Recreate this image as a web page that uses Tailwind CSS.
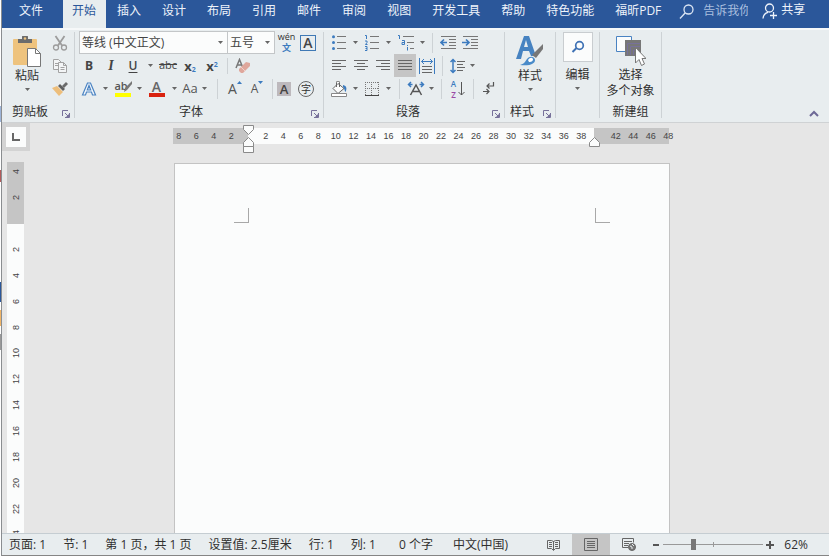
<!DOCTYPE html>
<html lang="zh-CN">
<head>
<meta charset="utf-8">
<title>文档</title>
<script src="https://cdn.jsdelivr.net/npm/@tailwindcss/browser@4"></script>
</head>
<body class="flex h-screen overflow-hidden bg-white font-['Open_Sans','Noto_Sans_CJK_SC',sans-serif] text-xs text-[#303030]">
<svg class="hidden" aria-hidden="true">
  <symbol id="tri" viewBox="0 0 5 3"><path d="M0 0h5L2.500 3z" fill="#666"/></symbol>
  <symbol id="launch" viewBox="0 0 8 8"><path d="M.5 6V.5H6M3 3l3.500 3.500M7.500 3v4.500H3" fill="none" stroke="#77719a"/><path d="M7 4v3H4z" fill="#77719a"/></symbol>
</svg>

<div class="flex w-0.5 shrink-0 flex-col border-r border-[#8a8d90]" aria-hidden="true">
  <div class="h-[106px]"></div><div class="h-4 bg-[#9db4d8]"></div><div class="h-12"></div>
  <div class="h-3 bg-[#b35a5a]"></div><div class="h-[100px]"></div>
  <div class="h-5 bg-[#2b579a]"></div><div class="h-2"></div><div class="h-4 bg-[#f0b567]"></div>
  <div class="h-2"></div><div class="h-4 bg-[#999]"></div>
</div>

<div class="flex min-w-0 flex-1 flex-col">
  <header class="flex h-7 shrink-0 bg-[#2b579a] leading-[22px] text-[#eef3fa]">
    <nav class="flex gap-px whitespace-nowrap">
      <a href="#" class="pr-[19px] pl-[17px]">文件</a>
      <a href="#" aria-current="page" class="bg-[#e8edef] pr-2.5 pl-[9px] text-[#2b579a]">开始</a>
      <a href="#" class="px-2.5">插入</a>
      <a href="#" class="px-2.5">设计</a>
      <a href="#" class="px-2.5">布局</a>
      <a href="#" class="px-2.5">引用</a>
      <a href="#" class="px-2.5">邮件</a>
      <a href="#" class="px-2.5">审阅</a>
      <a href="#" class="px-2.5">视图</a>
      <a href="#" class="px-2.5">开发工具</a>
      <a href="#" class="px-2.5">帮助</a>
      <a href="#" class="px-2.5">特色功能</a>
      <a href="#" class="px-2.5">福昕PDF</a>
    </nav>
    <label class="ml-2 flex gap-2">
      <svg class="mt-1 h-4 w-4" viewBox="0 0 16 16" fill="none" stroke="#dce6f4" stroke-width="1.300"><circle cx="9.500" cy="5.500" r="4.500"/><path d="M6.300 8.700L1 14.500"/></svg>
      <input aria-label="告诉我你想要做什么" placeholder="告诉我你想要做什么" class="h-[22px] w-[45px] bg-transparent outline-none placeholder:text-[#a9bfdf]">
    </label>
    <button class="ml-3.5 flex items-start gap-[3px]">
      <svg class="mt-[3px] h-4 w-4" viewBox="0 0 16 16" fill="none" stroke="#eef3fa" stroke-width="1.300"><circle cx="7.500" cy="5" r="4"/><path d="M1 15.500c.3-3.500 2-5.500 5-6.200M8 12.500h7M11.500 9v7"/></svg>
      <span class="leading-5">共享</span>
    </button>
  </header>

  <section class="flex h-[95px] shrink-0 border-t-2 border-b border-t-[#f6f8f9] border-b-[#cfd2d4] bg-[#e8edef]">

    <div class="mt-0.5 mb-1 flex w-[73px] flex-col border-r border-[#cdd2d5] *:shrink-0">
      <div class="-mt-px flex h-[69px]">
        <button class="flex w-[50px] flex-col items-center pt-[5px]">
          <svg class="h-8 w-7" viewBox="0 0 28 32"><rect x="0" y="3" width="24" height="26" rx="1" fill="#eec37e"/><path d="M5 7V3h4V1a3 2 0 0 1 6 0v2h4v4z" fill="#6c6c6c"/><circle cx="12" cy="2.500" r="1.200" fill="#eec37e"/><path d="M14.500 12.500h8l5 5v13h-13z" fill="#fff" stroke="#777"/><path d="M22.500 12.500v5h5" fill="none" stroke="#777"/></svg>
          <span class="leading-4">粘贴</span>
          <svg class="mt-1 h-[3px] w-[5px]"><use href="#tri"/></svg>
        </button>
        <div class="flex flex-1 flex-col">
          <button aria-label="剪切" class="grid h-[23px] w-4 place-items-center"><svg class="h-4 w-4" viewBox="0 0 16 16" fill="none" stroke="#9c9c9c" stroke-width="1.300"><path d="M3.500 1l6.500 9.500M12.500 1L6 10.500" stroke-width="1.800"/><circle cx="4" cy="12.500" r="2.500"/><circle cx="12" cy="12.500" r="2.500"/></svg></button>
          <button aria-label="复制" class="grid h-[23px] w-4 place-items-center"><svg class="h-4 w-4" viewBox="0 0 16 16" fill="#f3f5f6" stroke="#a2a2a2"><path d="M1.500 1.500h5l3 3v7h-8z"/><path d="M3 5.500h3M3 7.500h3"/><path d="M6.500 4.500h5l3 3v7h-8zM11.500 4.500v3h3"/><path d="M8.500 9.500h4M8.500 11.500h4"/></svg></button>
          <button aria-label="格式刷" class="grid h-[23px] w-4 place-items-center"><svg class="h-4 w-4" viewBox="0 0 16 16"><path d="M0 7l5-2 6 6-4 4z" fill="#edbe7b"/><path d="M6 5l2-2 5 5-2 2z" fill="#5f5f5f"/><path d="M10 5l4-4 2 2-4 4z" fill="#6b6b6b"/></svg></button>
        </div>
      </div>
      <div class="flex h-5 items-center pt-1"><span class="flex-1 text-center">剪贴板</span><button aria-label="剪贴板选项" class="grid w-4 place-items-center pt-1"><svg class="h-2 w-2"><use href="#launch"/></svg></button></div>
    </div>

    <div class="mt-0.5 mb-1 flex w-[249px] flex-col border-r border-[#cdd2d5] pl-1 *:shrink-0">
      <div class="-mt-px flex h-[23px] items-center">
        <div class="grid h-[23px] w-[149px] items-center border border-[#c3c6c8] bg-[#fbfcfc]">
          <select aria-label="字体" class="col-start-1 row-start-1 appearance-none bg-transparent px-0.5 text-[#444]"><option>等线 (中文正文)</option></select>
          <svg class="pointer-events-none col-start-1 row-start-1 mr-1 h-[3px] w-[5px] justify-self-end"><use href="#tri"/></svg>
        </div>
        <div class="grid h-[23px] w-[47px] items-center border border-l-0 border-[#c3c6c8] bg-[#fbfcfc]">
          <select aria-label="字号" class="col-start-1 row-start-1 appearance-none bg-transparent px-0.5 text-[#444]"><option>五号</option></select>
          <svg class="pointer-events-none col-start-1 row-start-1 mr-1 h-[3px] w-[5px] justify-self-end"><use href="#tri"/></svg>
        </div>
        <button aria-label="拼音指南" class="flex w-[23px] flex-col items-center text-[9px]"><span class="leading-[11px]">wén</span><span class="leading-3 font-bold text-[#3c7bbf]">文</span></button>
        <button aria-label="字符边框" class="ml-0.5 grid h-4 w-4 place-items-center border border-[#3f79b5] text-sm leading-3 font-semibold text-[#444]">A</button>
      </div>
      <div class="flex h-[23px] items-center text-[#444]">
        <button aria-label="加粗" class="w-5 font-bold">B</button>
        <button aria-label="倾斜" class="w-6 font-['Liberation_Serif',serif] text-sm font-bold italic">I</button>
        <button aria-label="下划线" class="w-5 font-semibold underline underline-offset-2">U</button>
        <button aria-label="下划线样式" class="grid h-4 w-3.5 place-items-center"><svg class="h-[3px] w-[5px]"><use href="#tri"/></svg></button>
        <button aria-label="删除线" class="w-[22px] text-[11px] line-through">abc</button>
        <button aria-label="下标" class="w-[22px] text-[13px] leading-4 font-bold">x<sub class="text-[7px] text-[#3c7bbf]">2</sub></button>
        <button aria-label="上标" class="w-[22px] text-[13px] leading-4 font-bold">x<sup class="text-[7px] text-[#3c7bbf]">2</sup></button>
        <span class="mx-1 h-4 w-px bg-[#cdd2d5]"></span>
        <button aria-label="清除格式" class="grid w-[22px] place-items-center"><svg class="h-4 w-4" viewBox="0 0 16 16"><path d="M1 10L4.500 1.500 8 10M2.500 7H7" fill="none" stroke="#777" stroke-width="1.500"/><path d="M4 11l7-7 4 1v3l-7 7H6l-2-2z" fill="#dfa79c"/><path d="M6 9l4 4" stroke="#efd0c9"/></svg></button>
      </div>
      <div class="flex h-[23px] items-center">
        <button aria-label="文本效果" class="grid w-5 place-items-center"><svg class="h-4 w-4" viewBox="0 0 16 16"><path d="M1.500 14L6.500 2h3l5 12h-3l-1-3h-5l-1 3zM6.300 9h3.400L8 4.500z" fill="#f4f8fc" stroke="#4a83c2" stroke-width="1.200"/></svg></button>
        <button aria-label="更多文本效果" class="grid h-4 w-3 place-items-center"><svg class="h-[3px] w-[5px]"><use href="#tri"/></svg></button>
        <button aria-label="突出显示" class="flex w-6 flex-col items-center"><span class="flex h-3 items-center text-[11px] font-semibold text-[#555]">ab<svg class="-ml-1 h-3 w-2" viewBox="0 0 8 12"><path d="M8 0v3L3 9 0 11l1-4z" fill="#777"/></svg></span><span class="h-1 w-4 bg-[#ffff00]"></span></button>
        <button aria-label="突出显示颜色" class="grid h-4 w-2 place-items-center"><svg class="h-[3px] w-[5px]"><use href="#tri"/></svg></button>
        <button aria-label="字体颜色" class="flex w-[27px] flex-col items-center"><span class="h-3 text-sm leading-3 font-semibold text-[#666]">A</span><span class="h-1 w-4 bg-[#d9220f]"></span></button>
        <button aria-label="更多字体颜色" class="grid h-4 w-2 place-items-center"><svg class="h-[3px] w-[5px]"><use href="#tri"/></svg></button>
        <button aria-label="更改大小写" class="flex h-4 w-[33px] items-center justify-center gap-1 text-[13px] text-[#555]">Aa<svg class="h-[3px] w-[5px]"><use href="#tri"/></svg></button>
        <span class="mx-1.5 h-5 w-px bg-[#cdd2d5]"></span>
        <button aria-label="增大字号" class="flex w-[22px] justify-center text-sm text-[#555]">A<svg class="mt-0.5 h-[3px] w-[5px]" viewBox="0 0 5 3"><path d="M0 3h5L2.500 0z" fill="#3c7bbf"/></svg></button>
        <button aria-label="减小字号" class="flex w-[22px] justify-center text-xs text-[#555]">A<svg class="h-[3px] w-[5px]" viewBox="0 0 5 3"><path d="M0 0h5L2.500 3z" fill="#3c7bbf"/></svg></button>
        <span class="mx-1 h-5 w-px bg-[#cdd2d5]"></span>
        <button aria-label="字符底纹" class="grid h-3.5 w-3.5 place-items-center bg-[#bdb9bd] text-[13px] leading-3 font-semibold text-[#444]">A</button>
        <button aria-label="带圈字符" class="ml-[7px] grid h-4 w-4 place-items-center rounded-full border border-[#666] text-[10px] leading-3">字</button>
      </div>
      <div class="flex h-5 items-center pt-1"><span class="flex-1 pr-1 text-center">字体</span><button aria-label="字体选项" class="grid w-4 place-items-center pt-1"><svg class="h-2 w-2"><use href="#launch"/></svg></button></div>
    </div>

    <div class="mt-0.5 mb-1 flex w-[181px] flex-col border-r border-[#cdd2d5] pl-1 *:shrink-0">
      <div class="-mt-px flex h-[23px] items-center">
        <button aria-label="项目符号" class="grid w-[22px] place-items-center"><svg class="h-4 w-4" viewBox="0 0 16 16"><path d="M6 1.500h9M6 7.500h9M6 13.500h9" stroke="#777"/><g fill="#3c7bbf"><circle cx="2.500" cy="1.700" r="1.500"/><circle cx="2.500" cy="7.500" r="1.500"/><circle cx="2.500" cy="13.500" r="1.500"/></g></svg></button>
        <button aria-label="项目符号库" class="grid h-4 w-[11px] place-items-center"><svg class="h-[3px] w-[5px]"><use href="#tri"/></svg></button>
        <button aria-label="编号" class="grid w-[22px] place-items-center"><svg class="h-4 w-4" viewBox="0 0 16 16" fill="none"><path d="M6 1.500h9M6 7.500h9M6 13.500h9" stroke="#777"/><path d="M1 .5h1.500V4M1 6h2v1.500L1.500 9.500h2M1 11.500h2v4H1M1.500 13.500H3" stroke="#3c7bbf"/></svg></button>
        <button aria-label="编号库" class="grid h-4 w-[11px] place-items-center"><svg class="h-[3px] w-[5px]"><use href="#tri"/></svg></button>
        <button aria-label="多级列表" class="grid w-[23px] place-items-center"><svg class="h-4 w-[18px]" viewBox="0 0 18 16" fill="none"><path d="M6 1.500h11M10 7.500h7M13 13.500h4" stroke="#777"/><path d="M1 .5h1.500V4M5 5.500h2.500v4H5V7.500h2.500M10.500 10v1M10.500 12v3.500" stroke="#3c7bbf"/></svg></button>
        <button aria-label="多级列表库" class="grid h-4 w-[11px] place-items-center"><svg class="h-[3px] w-[5px]"><use href="#tri"/></svg></button>
        <span class="mx-1 h-5 w-px bg-[#cdd2d5]"></span>
        <button aria-label="减少缩进量" class="grid w-[22px] place-items-center"><svg class="h-4 w-4" viewBox="0 0 16 16" fill="none"><path d="M1 1.500h15M9 4.500h7M9 7.500h7M9 10.500h7M1 13.500h15" stroke="#777"/><path d="M7 7.500H1M4 4.500l-3 3 3 3" stroke="#3c7bbf" stroke-width="1.700"/></svg></button>
        <button aria-label="增加缩进量" class="grid w-[22px] place-items-center"><svg class="h-4 w-4" viewBox="0 0 16 16" fill="none"><path d="M1 1.500h15M9 4.500h7M9 7.500h7M9 10.500h7M1 13.500h15" stroke="#777"/><path d="M0 7.500h6M4 4.500l3 3-3 3" stroke="#3c7bbf" stroke-width="1.700"/></svg></button>
      </div>
      <div class="flex h-[23px] items-center">
        <button aria-label="左对齐" class="grid h-[23px] w-[22px] place-items-center"><svg class="h-4 w-4" viewBox="0 0 16 16" stroke="#666"><path d="M1 2.500h14M1 5.500h9M1 8.500h14M1 11.500h9"/></svg></button>
        <button aria-label="居中" class="grid h-[23px] w-[22px] place-items-center"><svg class="h-4 w-4" viewBox="0 0 16 16" stroke="#666"><path d="M1 2.500h14M4 5.500h8M1 8.500h14M4 11.500h8"/></svg></button>
        <button aria-label="右对齐" class="grid h-[23px] w-[22px] place-items-center"><svg class="h-4 w-4" viewBox="0 0 16 16" stroke="#666"><path d="M1 2.500h14M6 5.500h9M1 8.500h14M6 11.500h9"/></svg></button>
        <button aria-label="两端对齐" aria-pressed="true" class="grid h-[23px] w-[22px] place-items-center bg-[#c5c5c5]"><svg class="h-4 w-4" viewBox="0 0 16 16" stroke="#666"><path d="M1 2.500h14M1 5.500h14M1 8.500h14M1 11.500h14"/></svg></button>
        <button aria-label="分散对齐" class="grid h-[23px] w-[22px] place-items-center"><svg class="h-4 w-4" viewBox="0 0 16 16" fill="none"><path d="M.5 0v16M15.500 0v16M2.500 3.500h11M5 1L2.500 3.500 5 6M11 1l2.500 2.500L11 6" stroke="#3c7bbf"/><path d="M3 8.500h10M3 11.500h10M3 14.500h10" stroke="#666"/></svg></button>
        <span class="mx-1 h-5 w-px bg-[#cdd2d5]"></span>
        <button aria-label="行和段落间距" class="flex h-[23px] w-[33px] items-center gap-1 pl-[3px]"><svg class="h-4 w-4" viewBox="0 0 16 16" fill="none"><path d="M3 1v14M.5 4L3 1.500 5.500 4M.5 12L3 14.500 5.500 12" stroke="#3c7bbf" stroke-width="1.500"/><path d="M7 3.500h8M7 6.500h6M7 9.500h8M7 12.500h6" stroke="#666"/></svg><svg class="h-[3px] w-[5px]"><use href="#tri"/></svg></button>
      </div>
      <div class="flex h-[23px] items-center">
        <button aria-label="底纹" class="grid w-[22px] place-items-center"><svg class="h-4 w-4" viewBox="0 0 16 16" fill="none"><path d="M7 2.500l6 5-6 5-5-5zM5.500 6V1.500a1.500 1.500 0 0 1 3 0V6" fill="#fbfcfc" stroke="#666"/><path d="M12 4c4 1 4 4 2.500 7-1-1-1-4-2.500-5z" fill="#3c7bbf"/><path d="M.5 12.500h15v3H.5z" fill="#fff" stroke="#888"/></svg></button>
        <button aria-label="底纹颜色" class="grid h-4 w-[11px] place-items-center"><svg class="h-[3px] w-[5px]"><use href="#tri"/></svg></button>
        <button aria-label="边框" class="grid w-[22px] place-items-center"><svg class="h-3.5 w-3.5" viewBox="0 0 14 14" fill="none"><path d="M0 .5h14M0 6.500h14M.5 0v14M6.500 0v14M13.500 0v14" stroke="#777" stroke-dasharray="1 1"/><path d="M0 13.500h14" stroke="#444"/></svg></button>
        <button aria-label="边框样式" class="grid h-4 w-[11px] place-items-center"><svg class="h-[3px] w-[5px]"><use href="#tri"/></svg></button>
        <span class="mx-[5px] h-5 w-px bg-[#cdd2d5]"></span>
        <button aria-label="中文版式" class="grid w-[22px] place-items-center"><svg class="h-4 w-[18px]" viewBox="0 0 18 16" fill="none"><path d="M3.500 14L9 4l5.500 10M6 10.500h6" stroke="#555" stroke-width="1.500"/><path d="M1.500 3.500h4M4 1L1.500 3.500 4 6M12.500 3.500h4M14 1l2.500 2.500L14 6" stroke="#3c7bbf" stroke-width="1.500"/></svg></button>
        <button aria-label="更多中文版式" class="grid h-4 w-[9px] place-items-center"><svg class="h-[3px] w-[5px]"><use href="#tri"/></svg></button>
        <span class="mx-[5px] h-5 w-px bg-[#cdd2d5]"></span>
        <button aria-label="排序" class="flex h-[22px] w-[22px] items-center justify-center gap-0.5 text-[8px] leading-[11px] font-semibold"><span class="flex flex-col"><span class="text-[#3c7bbf]">A</span><span class="text-[#9a4aa5]">Z</span></span><svg class="h-4 w-[7px]" viewBox="0 0 7 16" fill="none" stroke="#555"><path d="M3.500 1v13M.5 11l3 3 3-3"/></svg></button>
        <span class="mx-1 h-5 w-px bg-[#cdd2d5]"></span>
        <button aria-label="显示编辑标记" class="grid w-[22px] place-items-center"><svg class="h-4 w-4" viewBox="0 0 16 16" fill="none" stroke="#555" stroke-width="1.200"><path d="M12.500 1v4H6M8.500 2.500L6 5l2.500 2.500M2 10.500h6M5.500 8L8 10.500 5.500 13"/></svg></button>
      </div>
      <div class="flex h-5 items-center pt-1"><span class="flex-1 text-center">段落</span><button aria-label="段落选项" class="grid w-4 place-items-center pt-1"><svg class="h-2 w-2"><use href="#launch"/></svg></button></div>
    </div>

    <div class="mt-0.5 mb-1 flex w-[51px] flex-col border-r border-[#cdd2d5] *:shrink-0">
      <button class="-mt-px flex h-[69px] flex-col items-center pt-[5px]">
        <svg class="h-8 w-7" viewBox="0 0 28 32"><path d="M0 23L8 0h5l7 20h-5l-2-5H7l-2 8zM8 11h4l-2-7z" fill="#4783c1"/><path d="M27 8v5l-7 9-4-3z" fill="#777"/><path d="M4 29c4-1 5-3 7-6 3-4 8-2 8 1 0 4-5 6-15 5z" fill="#4a8bc9"/><path d="M12 24c2-3 5-3 5 0-1 2-3 2-4 2z" fill="#fff"/></svg>
        <span class="leading-4">样式</span>
        <svg class="mt-1 h-[3px] w-[5px]"><use href="#tri"/></svg>
      </button>
      <div class="flex h-5 items-center pt-1"><span class="flex-1 text-center">样式</span><button aria-label="样式选项" class="grid w-4 place-items-center pt-1"><svg class="h-2 w-2"><use href="#launch"/></svg></button></div>
    </div>

    <div class="mt-0.5 mb-1 flex w-11 flex-col border-r border-[#cdd2d5] *:shrink-0">
      <button class="flex flex-col items-center">
        <span class="grid h-[30px] w-[30px] place-items-center border border-[#c9cdd0] bg-[#fbfcfc]"><svg class="h-3.5 w-3.5" viewBox="0 0 14 14" fill="none" stroke="#3f72b5"><circle cx="8.500" cy="5.500" r="3.800" stroke-width="1.700"/><path d="M5.500 8L1.500 12" stroke-width="2"/></svg></span>
        <span class="mt-1 leading-[18px]">编辑</span>
        <svg class="mt-[3px] h-[3px] w-[5px]"><use href="#tri"/></svg>
      </button>
    </div>

    <div class="mt-0.5 mb-1 flex w-[62px] flex-col border-r border-[#cdd2d5] *:shrink-0">
      <button class="-mt-px flex h-[69px] flex-col items-center pt-1">
        <svg class="h-8 w-[30px] shrink-0" viewBox="0 0 30 32"><path d="M.5 1.500h15v15H.5z" fill="#fbfcfc" stroke="#4a83c2"/><path d="M9 5h16v16H9z" fill="#777"/><path d="M11.500 20V8.500H24M14.500 20v-8.500H24M17.500 20v-5H22" fill="none" stroke="#77719a"/><path d="M19.500 12.500V28l3.500-3.500 2.500 6 3-1.500-2.500-5.500H30z" fill="#fff" stroke="#777"/></svg>
        <span class="leading-4">选择<br>多个对象</span>
      </button>
      <div class="flex h-5 items-center justify-center pt-1">新建组</div>
    </div>
    <button aria-label="折叠功能区" class="mt-auto mr-2.5 mb-1 ml-auto"><svg class="h-2 w-2.5" viewBox="0 0 10 8" fill="none" stroke="#6d6896" stroke-width="2"><path d="M1 6l4-4 4 4"/></svg></button>
  </section>

  <main class="flex min-h-0 flex-1 bg-[#e6e6e6] font-['Liberation_Sans',sans-serif] text-[9px] leading-4 text-[#444]">
    <div class="flex w-7 shrink-0 flex-col">
      <button aria-label="制表符" class="grid h-7 w-7 shrink-0 place-items-center border-4 border-[#d3d3d3] bg-[#fbfcfc]"><svg class="h-2 w-2" viewBox="0 0 8 8"><path d="M1 0v7h7" fill="none" stroke="#666" stroke-width="2"/></svg></button>
      <div class="mt-[11px] ml-[5px] flex min-h-0 w-[17px] flex-1 flex-col overflow-hidden bg-[#fbfcfc] text-center leading-[18px]">
        <div class="flex shrink-0 flex-col bg-[#c5c5c5] pb-[14px] *:h-[26px] *:w-full *:rotate-180 *:[writing-mode:vertical-rl]"><span class="-mt-1">4</span><span>2</span></div>
        <div class="flex flex-col pt-3 *:h-[26px] *:w-full *:shrink-0 *:rotate-180 *:[writing-mode:vertical-rl]"><span>2</span><span>4</span><span>6</span><span>8</span><span>10</span><span>12</span><span>14</span><span>16</span><span>18</span><span>20</span><span>22</span><span>24</span></div>
      </div>
    </div>
    <div class="flex min-w-0 flex-1 flex-col items-center pt-[5px] pr-[17px]">
      <div class="relative flex h-4 w-[496px] text-center">
        <div class="w-[75px] bg-[#c5c5c5]"><div class="mr-2 -ml-[3px] grid grid-cols-4"><span>8</span><span>6</span><span>4</span><span>2</span></div></div>
        <div class="grid flex-1 grid-cols-19 bg-[#fbfcfc] pr-1 pl-[9px]"><span>2</span><span>4</span><span>6</span><span>8</span><span>10</span><span>12</span><span>14</span><span>16</span><span>18</span><span>20</span><span>22</span><span>24</span><span>26</span><span>28</span><span>30</span><span>32</span><span>34</span><span>36</span><span>38</span></div>
        <div class="w-[75px] bg-[#c5c5c5]"><div class="-mr-2 ml-[13px] grid grid-cols-4"><span>42</span><span>44</span><span>46</span><span>48</span></div></div>
        <svg class="absolute -top-[3px] left-[70px] h-7 w-[11px]" viewBox="0 0 11 28" fill="#fbfcfc" stroke="#8a8a8a"><path d="M.5.5h10v4l-5 5-5-5zM.5 21.500v-4l5-5 5 5v4zM.5 21.500h10v6H.5z"/></svg>
        <svg class="absolute top-[9px] right-[69px] h-2.5 w-[11px]" viewBox="0 0 11 10" fill="#fbfcfc" stroke="#8a8a8a"><path d="M.5 9.500v-4l5-5 5 5v4z"/></svg>
      </div>
      <article aria-label="文档页面" class="mt-[19px] ml-0.5 flex w-[496px] flex-1 justify-between border border-b-0 border-[#c3c3c3] bg-[#fbfcfc] px-[59px] pt-11">
        <span class="h-[15px] w-[15px] border-r border-b border-[#a8a8a8]"></span>
        <span class="h-[15px] w-[15px] border-b border-l border-[#a8a8a8]"></span>
      </article>
    </div>
  </main>

  <footer class="flex h-[23px] shrink-0 items-center border-t border-b border-t-[#c5cdd2] border-b-[#858585] bg-[#e8edef] pl-[7px] leading-4 whitespace-nowrap">
    <div class="flex gap-[17px]"><span>页面: 1</span><span>节: 1</span><span>第 1 页，共 1 页</span><span>设置值: 2.5厘米</span><span>行: 1</span><span>列: 1</span></div>
    <div class="ml-[23px] flex gap-5"><span>0 个字</span><span>中文(中国)</span></div>
    <div class="ml-auto flex h-full items-center">
      <button aria-label="阅读视图" class="grid h-full w-[38px] place-items-center"><svg class="h-3 w-[13px]" viewBox="0 0 13 12" fill="none" stroke="#666"><path d="M.5 1.500h4l2 1 2-1h4v8h-4l-2 2-2-2h-4zM6.500 2v9M2 3.500h3M2 5.500h3M2 7.500h3M8 3.500h3M8 5.500h3M8 7.500h3"/></svg></button>
      <button aria-label="页面视图" aria-pressed="true" class="grid h-full w-[38px] place-items-center bg-[#c5c5c5]"><svg class="h-[13px] w-3.5" viewBox="0 0 14 13" fill="none" stroke="#666"><path d="M.5.5h13v12H.5zM3 3.500h8M3 5.500h8M3 7.500h8M3 9.500h8"/></svg></button>
      <button aria-label="Web 版式视图" class="grid h-full w-[38px] place-items-center"><svg class="h-[13px] w-3.5" viewBox="0 0 14 13" fill="none" stroke="#666"><path d="M6 9.500H.5v-9h11v4M2 3.500h8M2 5.500h5M2 7.500h4"/><circle cx="10" cy="9" r="3.500" fill="#777"/><path d="M8 8l2 1v2M10 6l2 2" stroke="#e8edef"/></svg></button>
      <button aria-label="缩小" class="ml-1 grid h-4 w-2 place-items-center"><span class="h-0.5 w-1.5 bg-[#555]"></span></button>
      <input type="range" aria-label="缩放" min="0" max="100" value="29" class="mx-[3px] h-4 w-[100px] appearance-none bg-[linear-gradient(#999,#999),linear-gradient(#999,#999)] bg-[length:100%_1px,1px_5px] bg-center bg-no-repeat [&::-webkit-slider-thumb]:h-[11px] [&::-webkit-slider-thumb]:w-[5px] [&::-webkit-slider-thumb]:appearance-none [&::-webkit-slider-thumb]:bg-[#777]">
      <button aria-label="放大" class="grid h-4 w-2 place-items-center"><svg class="h-2 w-2" viewBox="0 0 8 8"><path d="M0 4h8M4 0v8" stroke="#555" stroke-width="2"/></svg></button>
      <output class="mr-[21px] ml-2.5">62%</output>
    </div>
  </footer>
</div>
</body>
</html>
